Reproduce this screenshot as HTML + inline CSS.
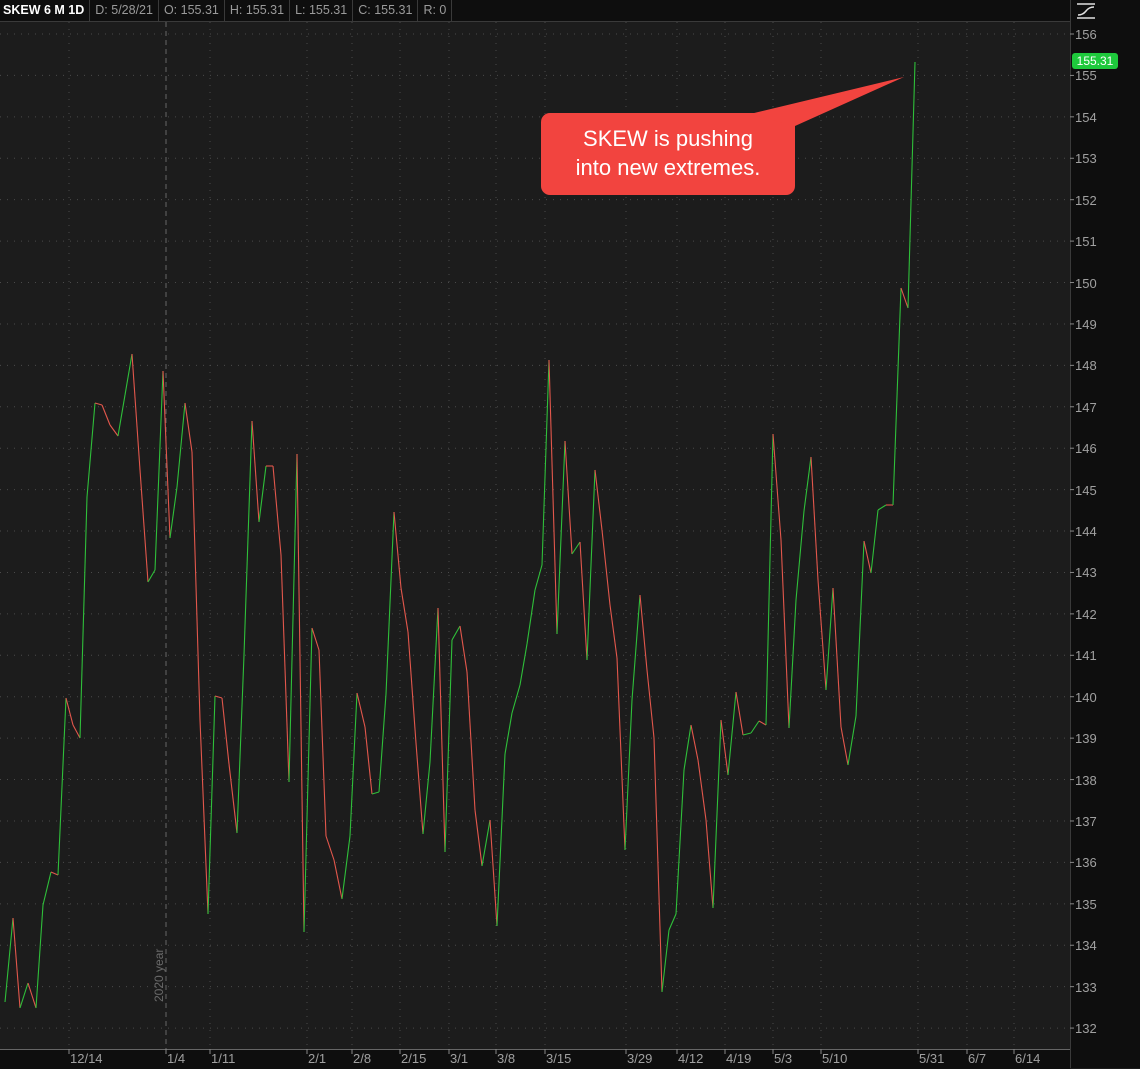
<!DOCTYPE html>
<html><head><meta charset="utf-8"><style>
html,body{margin:0;padding:0;background:#1c1c1c;width:1140px;height:1068px;overflow:hidden;font-family:"Liberation Sans",sans-serif}
#hdr{position:absolute;left:0;top:0;height:21px;width:1070px;background:#0e0e0e;border-bottom:1px solid #3a3a3a;display:flex;font-size:12.5px;color:#9a9a9a;line-height:21px}
#hdr div{padding:0 5px;border-right:1px solid #3a3a3a}
#hdr div.b{color:#fff;font-weight:bold;padding-left:3px}
#ax{position:absolute;left:1070px;top:0;width:70px;height:1068px;background:#0e0e0e;border-left:1px solid #3a3a3a}
#bot{position:absolute;left:0;top:1049px;width:1070px;height:19px;background:#0e0e0e;border-top:1px solid #666}
svg{position:absolute;left:0;top:0}
.yl{position:absolute;left:1075px;font-size:13px;color:#a0a0a0}
.xl{position:absolute;top:1051px;font-size:13px;color:#a0a0a0}
#pl{position:absolute;left:1072px;top:53px;width:46px;height:16px;background:#1ec93c;border-radius:3px;color:#fff;font-size:12px;line-height:16px;text-align:center}
#call{position:absolute;left:541px;top:113px;width:254px;height:82px;background:#f2443f;border-radius:9px;color:#fff;font-size:22px;text-align:center;line-height:29px;padding-top:11px;box-sizing:border-box}
</style></head><body>
<div id="hdr"><div class="b">SKEW 6 M 1D</div><div>D: 5/28/21</div><div>O: 155.31</div><div>H: 155.31</div><div>L: 155.31</div><div>C: 155.31</div><div>R: 0</div></div>
<div id="ax"></div><div id="bot"></div>
<svg id="s" width="1140" height="1068"></svg>
<div id="labels"></div>
<div id="pl">155.31</div>
<div id="call">SKEW is pushing<br>into new extremes.</div>
<svg width="1140" height="1068" style="pointer-events:none"><polygon points="750,114 904,77 795,126" fill="#f2443f"/>
<g stroke="#e0e0e0" stroke-width="1.5" fill="none"><line x1="1077" y1="4" x2="1095" y2="4"/><line x1="1077" y1="18" x2="1095" y2="18"/><path d="M1078 15 Q1083 15 1086 11 Q1089 7 1094 7"/></g></svg>
<script>
var s=document.getElementById('s'),h='',L='';
function Y(v){return 34+(156-v)*41.42;}
for(var v=132;v<=156;v++){var y=Y(v);h+='<line x1="0" y1="'+y+'" x2="1070" y2="'+y+'" stroke="#4a4a4a" stroke-dasharray="1,6"/>';
h+='<line x1="1070" y1="'+y+'" x2="1074" y2="'+y+'" stroke="#888"/>';L+='<div class="yl" style="top:'+(y-7)+'px">'+v+'</div>';}
var xs=[[69,'12/14'],[166,'1/4'],[210,'1/11'],[307,'2/1'],[352,'2/8'],[400,'2/15'],[449,'3/1'],[496,'3/8'],[545,'3/15'],[626,'3/29'],[677,'4/12'],[725,'4/19'],[773,'5/3'],[821,'5/10'],[918,'5/31'],[967,'6/7'],[1014,'6/14']];
xs.forEach(function(a){var x=a[0];h+='<line x1="'+x+'" y1="22" x2="'+x+'" y2="1049" stroke="'+(x==166?'#666':'#4a4a4a')+'" stroke-dasharray="'+(x==166?'5,4':'1,6')+'"/>';
h+='<line x1="'+x+'" y1="1049" x2="'+x+'" y2="1054" stroke="#888"/>';L+='<div class="xl" style="left:'+(x+1)+'px">'+a[1]+'</div>';});
h+='<text x="163" y="1002" transform="rotate(-90 163 1002)" fill="#6a6a6a" font-size="12" font-family="Liberation Sans">2020 year</text>';
var p=[[5,1002],[13,918],[20,1008],[28,983],[36,1008],[43,905],[51,872],[58,875],[66,698],[73,725],[80,738],[87,497],[95,403],[102,405],[110,425],[118,436],[125,395],[132,354],[140,470],[148,582],[155,570],[163,371],[170,538],[177,487],[185,403],[192,452],[200,720],[208,914],[215,696],[222,698],[229,764],[237,833],[244,655],[252,421],[259,522],[266,466],[273,466],[281,555],[289,782],[297,454],[304,932],[312,628],[319,650],[326,836],[334,860],[342,899],[350,836],[357,693],[365,727],[372,794],[379,792],[386,694],[394,512],[401,588],[408,632],[416,743],[423,834],[430,762],[438,608],[445,852],[452,640],[460,626],[467,672],[475,810],[482,866],[490,820],[497,926],[505,754],[512,713],[520,685],[527,644],[535,590],[542,565],[549,360],[557,634],[565,441],[572,554],[580,542],[587,660],[595,470],[602,530],[610,605],[617,658],[625,850],[632,700],[640,595],[647,670],[654,738],[662,992],[669,930],[676,914],[684,770],[691,725],[698,760],[706,820],[713,908],[721,720],[728,775],[736,692],[743,735],[751,733],[759,721],[766,725],[773,434],[781,540],[789,728],[796,600],[804,511],[811,457],[818,580],[826,690],[833,588],[841,727],[848,765],[856,716],[864,541],[871,573],[878,510],[886,505],[893,505],[901,288],[908,308],[915,62]];
for(var i=1;i<p.length;i++){var c=p[i][1]<p[i-1][1]?'#2fbf3a':'#e2574c';h+='<line x1="'+p[i-1][0]+'" y1="'+p[i-1][1]+'" x2="'+p[i][0]+'" y2="'+p[i][1]+'" stroke="'+c+'" stroke-width="1.1"/>';}
s.innerHTML=h;document.getElementById('labels').innerHTML=L;
</script>
</body></html>
